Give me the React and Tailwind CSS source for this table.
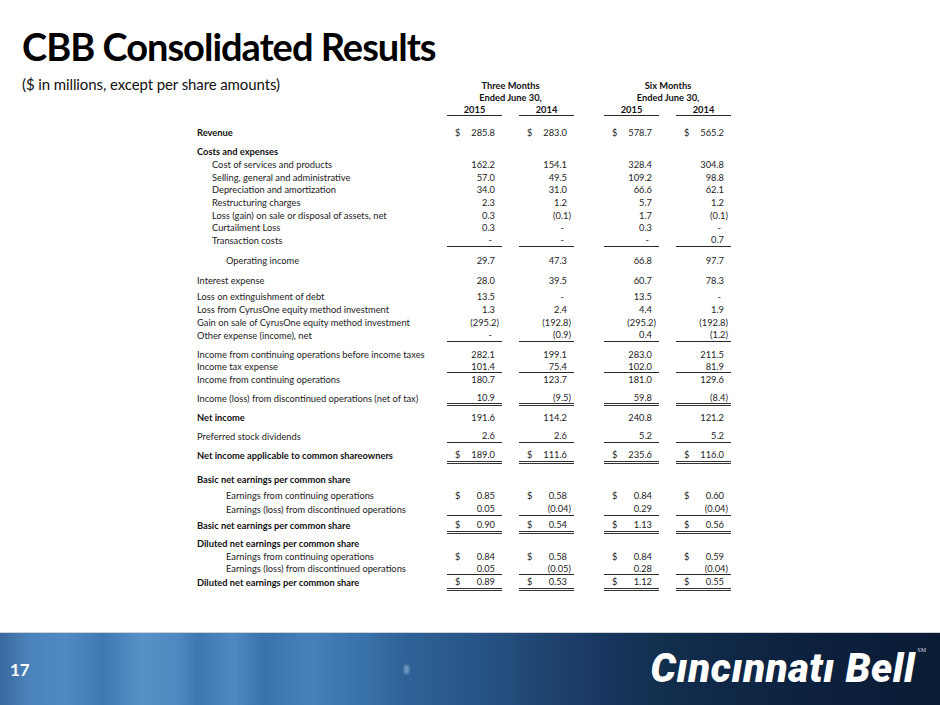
import React from "react";

const C1 = "w-[55px]";

// row definitions
const rows = [
  { label: "Revenue", ind: "pl-[197px]", bold: true, mt: "mt-[10px]", h: "h-[13px]", d: true, vals: ["285.8", "283.0", "578.7", "565.2"] },
  { label: "Costs and expenses", ind: "pl-[197px]", bold: true, mt: "mt-[6px]", h: "h-[13px]" },
  { label: "Cost of services and products", ind: "pl-[212px]", h: "h-[13px]", vals: ["162.2", "154.1", "328.4", "304.8"] },
  { label: "Selling, general and administrative", ind: "pl-[212px]", h: "h-[13px]", vals: ["57.0", "49.5", "109.2", "98.8"] },
  { label: "Depreciation and amortization", ind: "pl-[212px]", h: "h-[12px]", vals: ["34.0", "31.0", "66.6", "62.1"] },
  { label: "Restructuring charges", ind: "pl-[212px]", h: "h-[13px]", vals: ["2.3", "1.2", "5.7", "1.2"] },
  { label: "Loss (gain) on sale or disposal of assets, net", ind: "pl-[212px]", h: "h-[13px]", vals: ["0.3", "(0.1)", "1.7", "(0.1)"] },
  { label: "Curtailment Loss", ind: "pl-[212px]", h: "h-[12px]", vals: ["0.3", "-", "0.3", "-"] },
  { label: "Transaction costs", ind: "pl-[212px]", h: "h-[13px]", line: "s", vals: ["-", "-", "-", "0.7"] },
  { label: "Operating income", ind: "pl-[226px]", mt: "mt-[7px]", h: "h-[13px]", vals: ["29.7", "47.3", "66.8", "97.7"] },
  { label: "Interest expense", ind: "pl-[197px]", mt: "mt-[7px]", h: "h-[13px]", vals: ["28.0", "39.5", "60.7", "78.3"] },
  { label: "Loss on extinguishment of debt", ind: "pl-[197px]", mt: "mt-[3px]", h: "h-[13px]", vals: ["13.5", "-", "13.5", "-"] },
  { label: "Loss from CyrusOne equity method investment", ind: "pl-[197px]", h: "h-[13px]", vals: ["1.3", "2.4", "4.4", "1.9"] },
  { label: "Gain on sale of CyrusOne equity method investment", ind: "pl-[197px]", h: "h-[13px]", vals: ["(295.2)", "(192.8)", "(295.2)", "(192.8)"] },
  { label: "Other expense (income), net", ind: "pl-[197px]", h: "h-[13px]", line: "s", vals: ["-", "(0.9)", "0.4", "(1.2)"] },
  { label: "Income from continuing operations before income taxes", ind: "pl-[197px]", mt: "mt-[6px]", h: "h-[13px]", vals: ["282.1", "199.1", "283.0", "211.5"] },
  { label: "Income tax expense", ind: "pl-[197px]", h: "h-[12px]", line: "s", vals: ["101.4", "75.4", "102.0", "81.9"] },
  { label: "Income from continuing operations", ind: "pl-[197px]", h: "h-[13px]", vals: ["180.7", "123.7", "181.0", "129.6"] },
  { label: "Income (loss) from discontinued operations (net of tax)", ind: "pl-[197px]", mt: "mt-[6px]", h: "h-[14px]", line: "d", vals: ["10.9", "(9.5)", "59.8", "(8.4)"] },
  { label: "Net income", ind: "pl-[197px]", bold: true, mt: "mt-[5px]", h: "h-[13px]", vals: ["191.6", "114.2", "240.8", "121.2"] },
  { label: "Preferred stock dividends", ind: "pl-[197px]", mt: "mt-[6px]", h: "h-[13px]", line: "s", vals: ["2.6", "2.6", "5.2", "5.2"] },
  { label: "Net income applicable to common shareowners", ind: "pl-[197px]", bold: true, mt: "mt-[5px]", h: "h-[16px]", line: "d", d: true, vals: ["189.0", "111.6", "235.6", "116.0"] },
  { label: "Basic net earnings per common share", ind: "pl-[197px]", bold: true, mt: "mt-[9px]", h: "h-[13px]" },
  { label: "Earnings from continuing operations", ind: "pl-[226px]", mt: "mt-[3px]", h: "h-[13px]", d: true, vals: ["0.85", "0.58", "0.84", "0.60"] },
  { label: "Earnings (loss) from discontinued operations", ind: "pl-[226px]", mt: "mt-[1px]", h: "h-[13px]", line: "s", vals: ["0.05", "(0.04)", "0.29", "(0.04)"] },
  { label: "Basic net earnings per common share", ind: "pl-[197px]", bold: true, mt: "mt-[2px]", h: "h-[16px]", line: "d", d: true, vals: ["0.90", "0.54", "1.13", "0.56"] },
  { label: "Diluted net earnings per common share", ind: "pl-[197px]", bold: true, mt: "mt-[3px]", h: "h-[13px]" },
  { label: "Earnings from continuing operations", ind: "pl-[226px]", h: "h-[13px]", d: true, vals: ["0.84", "0.58", "0.84", "0.59"] },
  { label: "Earnings (loss) from discontinued operations", ind: "pl-[226px]", h: "h-[12px]", line: "s", vals: ["0.05", "(0.05)", "0.28", "(0.04)"] },
  { label: "Diluted net earnings per common share", ind: "pl-[197px]", bold: true, h: "h-[16px]", line: "d", d: true, vals: ["0.89", "0.53", "1.12", "0.55"] },
];

const gaps = ["ml-0", "ml-[17px]", "ml-[30px]", "ml-[17px]"];

function Cell({ v, dollar, line, gap }) {
  const lineCls =
    line === "s"
      ? "border-b border-[#2a2a2a]"
      : line === "d"
      ? "border-b-[3px] border-double border-[#333]"
      : "";
  const pr = v === "-" ? "pr-[10px]" : v && v.endsWith(")") ? "pr-[3px]" : "pr-[7px]";
  return (
    <div className={`${C1} ${gap} flex items-center justify-between ${lineCls}`}>
      <span className="pl-[8px]">{dollar ? "$" : ""}</span>
      <span className={pr}>{v}</span>
    </div>
  );
}

function Row({ r }) {
  return (
    <div className={`flex ${r.mt || ""} ${r.h}`}>
      <div className={`w-[447px] ${r.ind} flex items-center whitespace-nowrap ${r.bold ? "font-bold text-[#111]" : "text-[#222]"}`}>
        {r.label}
      </div>
      {r.vals &&
        r.vals.map((v, i) => <Cell key={i} v={v} dollar={r.d} line={r.line} gap={gaps[i]} />)}
    </div>
  );
}

function Logo() {
  return (
    <div className="flex items-start">
      <span className="font-['Roboto','Liberation_Sans',sans-serif] font-black italic text-white text-[40px] leading-none tracking-[0.6px]">
        Cıncınnatı Bell
      </span>
      <span className="font-['Liberation_Serif',serif] text-[6px] text-[#d8dde5] ml-[2px] -mt-[3px]">SM</span>
    </div>
  );
}

export default function App() {
  return (
    <div className="w-[940px] h-[705px] bg-white flex flex-col overflow-hidden font-['Lato',sans-serif] text-black">
      <div className="flex-1 flex flex-col">
        <h1 className="ml-[22px] mt-[24px] text-[38px] font-bold leading-[44px] tracking-[-1px] text-black">
          CBB Consolidated Results
        </h1>
        <div className="flex mt-[5px]">
          <div className="w-[447px] pl-[22px] pt-[1px] text-[15px] leading-[20px] tracking-[-0.1px] text-[#111] whitespace-nowrap">
            ($ in millions, except per share amounts)
          </div>
          <div className="flex flex-col pt-[7px] font-bold text-[9.3px] text-[#111]">
            <div className="flex">
              <div className="w-[127px] text-center leading-[12px]">Three Months</div>
              <div className="w-[128px] ml-[30px] text-center leading-[12px]">Six Months</div>
            </div>
            <div className="flex">
              <div className="w-[127px] text-center leading-[12px]">Ended June 30,</div>
              <div className="w-[128px] ml-[30px] text-center leading-[12px]">Ended June 30,</div>
            </div>
            <div className="flex h-[12px]">
              <div className="w-[55px] text-center border-b border-[#2a2a2a] leading-[11px]">2015</div>
              <div className="w-[55px] ml-[17px] text-center border-b border-[#2a2a2a] leading-[11px]">2014</div>
              <div className="w-[55px] ml-[30px] text-center border-b border-[#2a2a2a] leading-[11px]">2015</div>
              <div className="w-[55px] ml-[17px] text-center border-b border-[#2a2a2a] leading-[11px]">2014</div>
            </div>
          </div>
        </div>
        <div className="flex flex-col text-[9.3px] text-[#222]">
          {rows.map((r, i) => (
            <Row key={i} r={r} />
          ))}
        </div>
      </div>
      <footer className="relative h-[73px] border-t border-[#cfd3d8] flex items-center justify-between pl-[10px] pr-[14px] bg-[linear-gradient(90deg,#39699d_0%,#4a82bb_3%,#4f8ac4_7%,#3f79b3_11%,#5891c7_15%,#4f89c1_19%,#3d78b3_21%,#4e89c1_25%,#3a72ac_28%,#4780ba_33%,#3b74ad_38%,#2f6398_43%,#2a5a8c_48%,#254f80_53%,#1f4470_58%,#183760_64%,#13304f_70%,#102948_76%,#0d223f_85%,#0a1b34_100%)]">
        <div className="absolute left-[404px] top-[32px] w-[5px] h-[9px] rounded-full bg-[#8fb3d6] opacity-70 blur-[1px]" />
        <span className="relative text-white font-bold text-[17px] leading-none">17</span>
        <div className="relative">
          <Logo />
        </div>
      </footer>
    </div>
  );
}
